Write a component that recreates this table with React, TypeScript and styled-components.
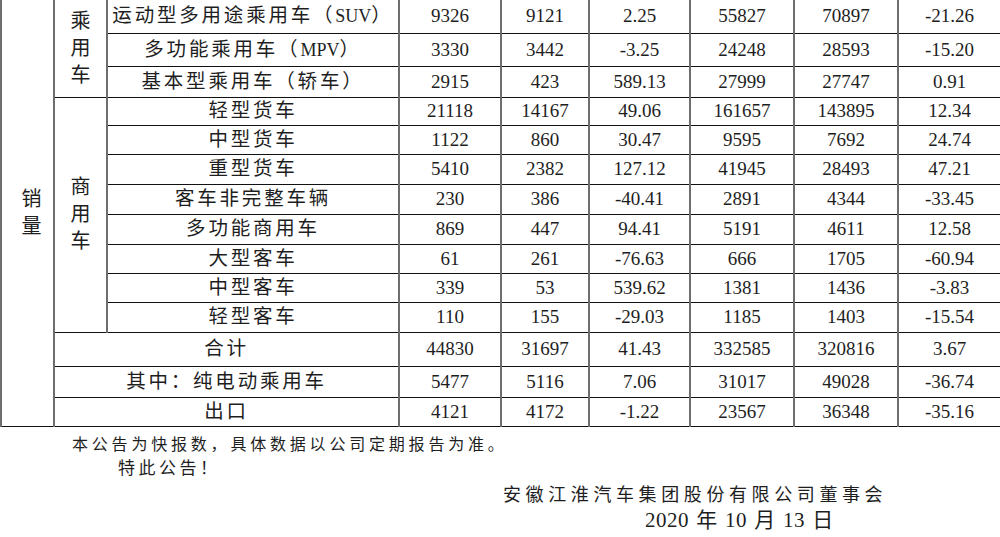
import { createGlobalStyle } from 'styled-components';
import styled from 'styled-components';

const GlobalStyle = createGlobalStyle`
  html, body {
    margin: 0;
    padding: 0;
    background: #ffffff;
  }
  body {
    font-family: "Liberation Serif", "Noto Sans CJK SC", serif;
    color: #1e1e1e;
  }
`;

const Page = styled.div`
  width: 1000px;
  height: 537px;
  overflow: hidden;
`;

const Sheet = styled.table`
  width: 1000px;
  table-layout: fixed;
  border-collapse: collapse;
  font-family: "Liberation Serif", "Noto Sans CJK SC", serif;
`;

const Row = styled.tr<{ $h: number }>`
  height: ${(p) => p.$h}px;
`;

const Cell = styled.td<{ $first?: boolean }>`
  padding: 0;
  text-align: center;
  vertical-align: middle;
  line-height: 20px;
  white-space: nowrap;
  border-left: 2px solid #6e6e6e;
  border-right: 2px solid #6e6e6e;
  border-top: ${(p) => (p.$first ? 'none' : '1px solid #111')};
  border-bottom: 1px solid #111;
`;

const NameCell = styled(Cell)`
  font-size: 19.5px;
  letter-spacing: 2.8px;
`;

const NumCell = styled(Cell)`
  font-size: 19px;
`;

const Latin = styled.span`
  letter-spacing: 0;
  font-size: 18px;
`;

const Stack = styled.div<{ $shift?: number }>`
  display: flex;
  flex-direction: column;
  align-items: center;
  font-size: 20px;
  line-height: 27px;
  padding-left: ${(p) => p.$shift ?? 0}px;
`;

const Notes = styled.div`
  font-family: "Noto Sans CJK SC", sans-serif;
  color: #1e1e1e;
`;

const Line = styled.div<{ $indent: number; $gap: number; $size: number; $spacing: number }>`
  padding-left: ${(p) => p.$indent}px;
  margin-top: ${(p) => p.$gap}px;
  font-size: ${(p) => p.$size}px;
  letter-spacing: ${(p) => p.$spacing}px;
  line-height: 22px;
  white-space: pre;
`;

const DateLine = styled(Line)`
  font-family: "Liberation Serif", "Noto Sans CJK SC", serif;
  word-spacing: 1.5px;
`;

type Item = { name: React.ReactNode; v: string[] };

const passenger: Item[] = [
  { name: <>运动型多用途乘用车（<Latin>SUV</Latin>）</>, v: ['9326', '9121', '2.25', '55827', '70897', '-21.26'] },
  { name: <>多功能乘用车（<Latin>MPV</Latin>）</>, v: ['3330', '3442', '-3.25', '24248', '28593', '-15.20'] },
  { name: '基本型乘用车（轿车）', v: ['2915', '423', '589.13', '27999', '27747', '0.91'] },
];

const commercial: Item[] = [
  { name: '轻型货车', v: ['21118', '14167', '49.06', '161657', '143895', '12.34'] },
  { name: '中型货车', v: ['1122', '860', '30.47', '9595', '7692', '24.74'] },
  { name: '重型货车', v: ['5410', '2382', '127.12', '41945', '28493', '47.21'] },
  { name: '客车非完整车辆', v: ['230', '386', '-40.41', '2891', '4344', '-33.45'] },
  { name: '多功能商用车', v: ['869', '447', '94.41', '5191', '4611', '12.58'] },
  { name: '大型客车', v: ['61', '261', '-76.63', '666', '1705', '-60.94'] },
  { name: '中型客车', v: ['339', '53', '539.62', '1381', '1436', '-3.83'] },
  { name: '轻型客车', v: ['110', '155', '-29.03', '1185', '1403', '-15.54'] },
];

const totals: Item[] = [
  { name: '合计', v: ['44830', '31697', '41.43', '332585', '320816', '3.67'] },
  { name: '其中：纯电动乘用车', v: ['5477', '5116', '7.06', '31017', '49028', '-36.74'] },
  { name: '出口', v: ['4121', '4172', '-1.22', '23567', '36348', '-35.16'] },
];

const heights = [33, 33, 31, 28, 29, 30, 30, 30, 29, 29, 30, 34, 31, 29];
const widths = [53, 53, 292, 102, 88, 101, 104, 104, 103];

const Vertical = ({ text, shift }: { text: string; shift?: number }) => (
  <Stack $shift={shift}>
    {text.split('').map((c, i) => (
      <span key={i}>{c}</span>
    ))}
  </Stack>
);

const Numbers = ({ v, first }: { v: string[]; first?: boolean }) => (
  <>
    {v.map((n, i) => (
      <NumCell key={i} $first={first}>
        {n}
      </NumCell>
    ))}
  </>
);

export default function App() {
  return (
    <Page>
      <GlobalStyle />
      <Sheet>
        <colgroup>
          {widths.map((w, i) => (
            <col key={i} style={{ width: w }} />
          ))}
        </colgroup>
        <tbody>
          {passenger.map((r, i) => (
            <Row key={`p${i}`} $h={heights[i]}>
              {i === 0 && (
                <Cell rowSpan={14} $first>
                  <Vertical text="销量" shift={8} />
                </Cell>
              )}
              {i === 0 && (
                <Cell rowSpan={3} $first>
                  <Vertical text="乘用车" />
                </Cell>
              )}
              <NameCell $first={i === 0}>{r.name}</NameCell>
              <Numbers v={r.v} first={i === 0} />
            </Row>
          ))}
          {commercial.map((r, i) => (
            <Row key={`c${i}`} $h={heights[i + 3]}>
              {i === 0 && (
                <Cell rowSpan={8}>
                  <Vertical text="商用车" />
                </Cell>
              )}
              <NameCell>{r.name}</NameCell>
              <Numbers v={r.v} />
            </Row>
          ))}
          {totals.map((r, i) => (
            <Row key={`t${i}`} $h={heights[i + 11]}>
              <NameCell colSpan={2}>{r.name}</NameCell>
              <Numbers v={r.v} />
            </Row>
          ))}
        </tbody>
      </Sheet>
      <Notes>
        <Line $indent={72} $gap={5} $size={16} $spacing={3.8}>
          本公告为快报数，具体数据以公司定期报告为准。
        </Line>
        <Line $indent={118} $gap={2} $size={17} $spacing={3.5}>
          特此公告！
        </Line>
        <Line $indent={503} $gap={4} $size={18} $spacing={4.6}>
          安徽江淮汽车集团股份有限公司董事会
        </Line>
        <DateLine $indent={645} $gap={5} $size={21} $spacing={0.5}>
          {'2020 年 10 月 13 日'}
        </DateLine>
      </Notes>
    </Page>
  );
}
